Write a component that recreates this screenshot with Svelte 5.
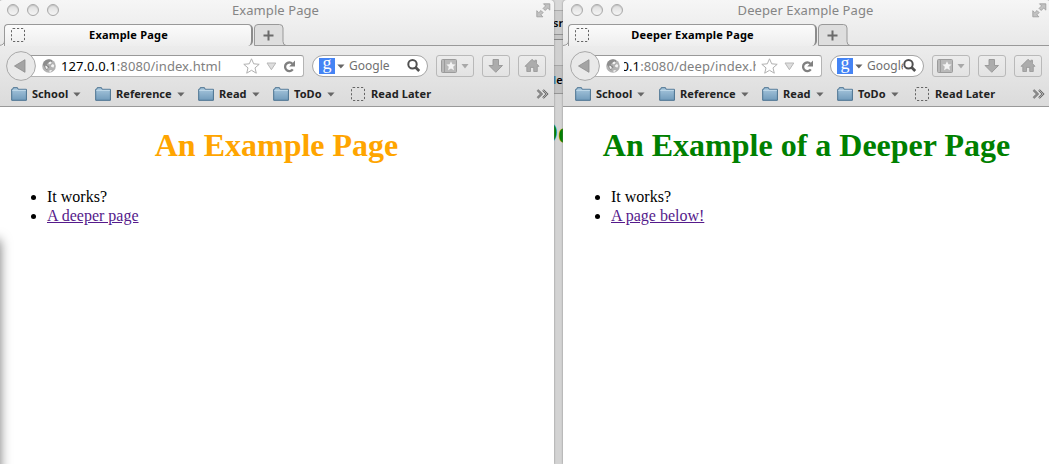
<script>
  const bookmarks = [
    { label: 'School', width: 84 },
    { label: 'Reference', width: 103 },
    { label: 'Read', width: 75 },
    { label: 'ToDo', width: 78 }
  ];
  const windows = [
    {
      kind: 'first', title: 'Example Page', heading: 'An Example Page',
      host: '127.0.0.1', path: ':8080/index.html', link: 'A deeper page'
    },
    {
      kind: 'second', title: 'Deeper Example Page', heading: 'An Example of a Deeper Page',
      host: '127.0.0.1', path: ':8080/deep/index.html', link: 'A page below!'
    }
  ];
</script>

{#snippet placeholder()}
  <svg class="placeholder" width="14" height="14" viewBox="0 0 14 14">
    <rect x=".5" y=".5" width="13" height="13" rx="1.500" fill="none" stroke="#666" stroke-dasharray="2.200 1.800" />
  </svg>
{/snippet}

{#snippet caret()}
  <svg class="caret" width="8" height="5" viewBox="0 0 8 5"><path d="M.3.500h7.200L3.900 4.600z" fill="#666" /></svg>
{/snippet}

<div class="desktop">
  <div class="behind">
    <div class="behind-title"></div>
    <div class="behind-tab">sr</div>
    <div class="behind-gap"></div>
    <div class="behind-nav"></div>
    <div class="behind-marks"><i>l</i>e</div>
    <div class="behind-heading">De</div>
  </div>

  {#each windows as w}
    <section class="window {w.kind}">
      <header class="titlebar">
        <div class="lights"><i></i><i></i><i></i></div>
        <div class="title">{w.title}</div>
        <svg class="full" width="15" height="15" viewBox="0 0 15 15" fill="#c2c2c2" stroke="#9a9a9a" stroke-width=".8">
          <path d="M7.500.8h6.300v6.300l-2.100-2.100-2.500 2.500-2.100-2.100 2.500-2.500z" />
          <path d="M.8 7.700l2 2 2.200-2.200 2.100 2.100-2.200 2.200 2 2H.8z" />
        </svg>
      </header>

      <div class="tabs">
        <svg class="flare" width="6" height="22" viewBox="0 0 6 22"><path d="M0 21.500Q5.500 21 5.500 17V4Q5.500 2 6 1V22H0z" fill="#f4f4f4" /><path d="M0 21.500Q5.500 21 5.500 17V3" fill="none" stroke="#999" /></svg>
        <div class="tab">
          {@render placeholder()}
          <span>{w.title}</span>
        </div>
        <svg class="newtab" width="34" height="22" viewBox="0 0 34 22">
          <path d="M.5 21.500V4Q.5.500 4 .5h21.500Q29 .5 29 4v13.500Q29 21 32 21.500z" fill="#dedede" stroke="#999" />
          <path d="M14.500 6.500v10M9.500 11.500h10" stroke="#6b6b6b" stroke-width="2" />
        </svg>
        <div class="rest"></div>
      </div>

      <div class="nav">
        <div class="address">
          <svg class="back" width="30" height="30" viewBox="0 0 30 30">
            <circle cx="15" cy="15" r="14.400" fill="#e9e9e9" stroke="#a8a8a8" />
            <path d="M8.500 15L19 8.700v12.600z" fill="#a4a4a4" stroke="#8a8a8a" stroke-width=".8" />
          </svg>
          <svg class="globe" width="14" height="14" viewBox="0 0 14 14">
            <circle cx="7" cy="7" r="6.800" fill="#b2b2b2" />
            <path d="M4 1l3-.7 2.700.7.700 1.500-1.900 1-1.200 1.200-2-.2-.6 1.500 2.300.9.500 1.600-1.800 1.100-.4 1.800-2-1.700L2 7.200.8 5.500 2 2.800z" fill="#8d8d8d" />
            <path d="M6.900 3.300l1.700-.9 1 .8-.7 1.500-1.700.5-1-.8zM3.200 6.700l1.400.2 1.200 1.500-.7 1.800-1.300-1zM9.200 6.300l1.700-1.300 1.300 1.300-.6 2.200-1.300-.2-1.300-.9zM6.700 12l2.100-1 1.400.6-2 1.300z" fill="#f4f4f4" />
          </svg>
          <div class="url"><span><b>{w.host}</b>{w.path}</span></div>
          <svg class="star" width="17" height="16" viewBox="0 0 17 16"><path d="M8.500.8l2.200 5 5.500.5-4.200 3.600 1.300 5.300-4.800-2.900-4.800 2.900L5 9.900.8 6.300l5.500-.5z" fill="#fff" stroke="#b0b0b0" /></svg>
          <svg class="drop" width="11" height="9" viewBox="0 0 11 9"><path d="M1 1h8.800L5.400 7.700z" fill="#dedede" stroke="#b8b8b8" /></svg>
          <svg class="reload" width="13" height="13" viewBox="0 0 13 13"><path d="M9.400 3.700A4.300 4.300 0 1 0 9.800 9.400" fill="none" stroke="#808080" stroke-width="2.300" /><path d="M12 .6v6H6.200z" fill="#808080" /></svg>
        </div>
        <div class="search">
          <span class="g">g</span>
          {@render caret()}
          <span class="engine">Google</span>
          <svg class="magnifier" width="14" height="14" viewBox="0 0 14 14"><circle cx="5.500" cy="5.300" r="4.200" fill="none" stroke="#505050" stroke-width="2" /><path d="M8.500 8.300l3.700 3.700" stroke="#505050" stroke-width="2.700" /></svg>
        </div>
        <div class="button wide">
          <svg width="29" height="15" viewBox="0 0 29 15">
            <rect x=".5" y=".5" width="15" height="13" rx="1" fill="#b9b9b9" stroke="#9c9c9c" />
            <path d="M3.500 1v12" stroke="#9c9c9c" />
            <path d="M10 2.200l1.400 3.100 3.200.3-2.400 2.200.8 3.400-3-1.800-3 1.800.8-3.400-2.400-2.200 3.200-.3z" fill="#f3f3f3" />
            <path d="M20.500 5h7L24 9.400z" fill="#a8a8a8" />
          </svg>
        </div>
        <div class="button">
          <svg width="16" height="16" viewBox="0 0 16 16"><path d="M5 1.500h5.500v6h4L7.800 14.300 1 7.500h4z" fill="#acacac" stroke="#959595" stroke-width=".9" /></svg>
        </div>
        <div class="button">
          <svg width="16" height="16" viewBox="0 0 16 16"><path d="M8 1.300l2.800 2.600V2.200h1.700v3.400L15 8.300h-1.700v5.200H9.700V9.400H6.500v4.100H2.800V8.300H1z" fill="#acacac" stroke="#959595" stroke-width=".8" /></svg>
        </div>
      </div>

      <div class="bookmarks">
        {#each bookmarks as b}
          <div class="bookmark" style:width="{b.width}px">
            <svg class="folder" width="16" height="14" viewBox="0 0 16 14">
              <defs><linearGradient id="blue-{w.kind}" x1="0" y1="0" x2="0" y2="1"><stop offset="0" stop-color="#a9c8de" /><stop offset="1" stop-color="#719bbb" /></linearGradient></defs>
              <path d="M.7 13.300V2.300h1L2.200.7h4.300l.6 1.600h8.300v11z" fill="url(#blue-{w.kind})" stroke="#48708f" />
              <path d="M1.200 3.300h13.700" stroke="#c5dcec" />
            </svg>
            <span>{b.label}</span>
            {@render caret()}
          </div>
        {/each}
        <div class="bookmark later">{@render placeholder()}<span>Read Later</span></div>
        <svg class="more" width="13" height="10" viewBox="0 0 13 10"><path d="M1.500 1l4 4-4 4M7 1l4 4-4 4" fill="none" stroke="#666" stroke-width="2.200" /><path d="M1.500 1l4 4-4 4M7 1l4 4-4 4" fill="none" stroke="#ddd" stroke-width=".6" /></svg>
      </div>

      <main>
        <h1>{w.heading}</h1>
        <ul>
          <li>It works?</li>
          <li><a href="#top">{w.link}</a></li>
        </ul>
      </main>
    </section>
  {/each}
  <div class="edge-shadow"></div>
</div>

<style>
  :global(body) { margin: 0; overflow: hidden; }
  * { box-sizing: border-box; }
  svg { display: block; flex: none; }
  .desktop { position: relative; width: 1049px; height: 464px; overflow: hidden; background: #d3d3d3; font-family: 'Noto Sans', sans-serif; }

  .behind { position: absolute; left: 552px; top: 0; width: 14px; height: 464px; overflow: hidden; font-size: 11px; font-weight: 600; background: #d3d3d3; }
  .behind-title { height: 11px; background: #d8d8d8; border-bottom: 1px solid #aaa; }
  .behind-tab { height: 24px; padding-left: 1px; line-height: 23px; background: #cbcbcb; border-bottom: 1px solid #929292; }
  .behind-gap { height: 5px; background: #c6c6c6; border-bottom: 1px solid #858585; }
  .behind-nav { height: 26px; background: #d0d0d0; border-bottom: 1px solid #a6a6a6; }
  .behind-marks { height: 28px; padding-left: 1px; line-height: 27px; background: #c2c2c2; border-bottom: 1px solid #949494; }
  .behind-marks i { color: #1672a8; font-style: normal; }
  .behind-heading { margin: 18px 0 0 -17px; font: bold 32px/40px 'Liberation Serif', serif; color: #008000; white-space: nowrap; }

  .window { position: absolute; top: 0; height: 464px; overflow: hidden; display: flex; flex-direction: column; background: linear-gradient(#f6f6f6, #e8e8e8 45px, #ececec 46px, #dbdbdb 106px, #fff 107px); border-radius: 4px 4px 0 0; box-shadow: 0 0 2px #777; }
  .first { left: -1px; width: 555px; }
  .second { left: 563px; width: 487px; }

  .titlebar { display: flex; height: 24px; flex: none; align-items: flex-start; justify-content: space-between; padding: 3px 3px 0 8px; }
  .lights { display: flex; gap: 8px; width: 58px; padding-top: 1px; }
  .lights i { width: 12px; height: 12px; border: 1px solid #a9a9a9; border-radius: 50%; background: linear-gradient(#ddd, #f5f5f5); box-shadow: inset 0 1px 1px #c4c4c4; }
  .title { flex: 1; margin-right: 50px; text-align: center; line-height: 15px; font-size: 13px; letter-spacing: .08px; color: #858585; }

  .tabs { display: flex; height: 22px; flex: none; }
  .tab { display: flex; align-items: center; width: 249px; margin-left: -1px; border-top: 1px solid #999; border-right: 2px solid #8c8c8c; border-left: 1px solid #999; border-radius: 4px 5px 5px 0; background: linear-gradient(#fbfbfb, #eee); padding: 0 19px 0 6px; font-size: 11px; font-weight: 700; letter-spacing: .2px; }
  .tab span { flex: 1; text-align: center; line-height: 19px; margin-top: -2px; }
  .tab .placeholder { margin-top: -1px; }
  .newtab { margin-left: 1px; }
  .rest { flex: 1; margin-left: -2px; border-bottom: 1px solid #999; }

  .nav { display: flex; height: 39px; flex: none; padding: 5px 8px 4px 7px; align-items: center; }
  .address { flex: 1; display: flex; align-items: center; height: 22px; margin-left: 15px; border: 1px solid #b4b4b4; border-top-color: #999; border-radius: 0 3px 3px 0; background: #fff; margin-right: 8px; padding-right: 7px; min-width: 0; }
  .back { margin-left: -16px; }
  .globe { margin-left: 6px; }
  .url { flex: 1; overflow: hidden; margin-left: 5px; min-width: 0; height: 20px; line-height: 20px; font-size: 13px; letter-spacing: .08px; color: #808080; white-space: nowrap; }
  .url b { font-weight: 400; color: #000; }
  .second .url { display: flex; margin-left: 4px; margin-right: 5px; letter-spacing: .12px; }
  .second .url span { margin-left: -40px; }
  .drop { margin-left: 6px; }
  .reload { margin-left: 6px; }
  .search { display: flex; align-items: center; width: 116px; height: 22px; border: 1px solid #a5a5a5; border-radius: 11px; background: #fff; margin-right: 8px; padding: 0 6px; }
  .second .search { width: 94px; }
  .g { width: 16px; height: 16px; flex: none; background: #4584f4; color: #fff; font: 18px/10px 'Liberation Serif', serif; text-align: center; }
  .search .caret { margin: 0 4px 0 2px; }
  .engine { flex: 1; min-width: 0; overflow: hidden; font-size: 12px; line-height: 20px; color: #707070; }
  .button { display: flex; align-items: center; justify-content: center; width: 28px; height: 22px; margin-left: 8px; border: 1px solid #b9b9b9; border-radius: 3px; background: linear-gradient(#ececec, #e3e3e3); }
  .button.wide { width: 38px; margin-left: 0; }

  .bookmarks { display: flex; align-items: center; height: 22px; flex: none; padding: 0 5px 3px 12px; border-bottom: 1px solid #999; font-size: 11px; font-weight: 700; color: #222; }
  .bookmark { display: flex; align-items: center; flex: none; white-space: nowrap; }
  .bookmark span { margin-left: 5px; line-height: 15px; margin-top: -1px; letter-spacing: .05px; }
  .bookmark .caret { margin-left: 5px; }
  .bookmark.later span { margin-left: 6px; letter-spacing: .1px; }
  .more { margin-left: auto; }

  main { flex: 1; background: #fff; padding: 0 8px; font: 16px/19px 'Liberation Serif', serif; color: #000; }
  h1 { margin: 19px 0 23px; text-align: center; font-size: 32px; line-height: 38px; color: orange; }
  .second h1 { color: green; }
  ul { margin: 0; padding-left: 40px; }
  a { color: #551a8b; text-decoration: underline; }
  .edge-shadow { position: absolute; left: -20px; top: 240px; width: 20px; height: 260px; box-shadow: 0 0 12px 0 #777; }
</style>
